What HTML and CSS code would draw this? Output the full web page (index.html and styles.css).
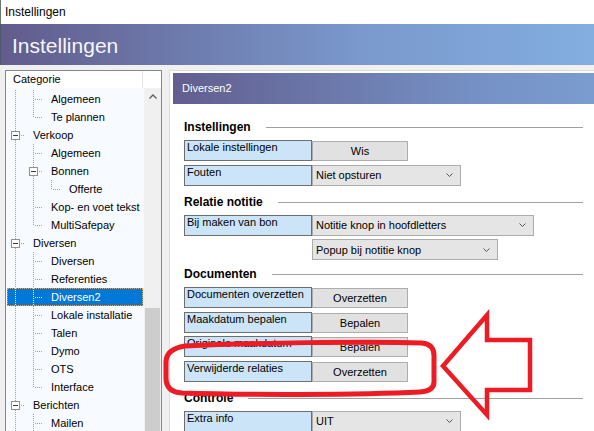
FILE: index.html
```html
<!DOCTYPE html>
<html lang="nl">
<head>
<meta charset="utf-8">
<title>Instellingen</title>
<link rel="stylesheet" href="styles.css">
</head>
<body>
<div class="window">
  <div class="titlebar">Instellingen</div>
  <div class="banner">Instellingen</div>
  <div class="main">
    <div class="tree">
      <div class="tree-head"><span class="tree-col">Categorie</span><span class="tree-rest"></span></div>
      <div class="tree-body">
        <div class="tree-rows">
          <div class="row"><span class="g g-line"></span><span class="g g-tee"></span><span class="txt">Algemeen</span></div>
          <div class="row"><span class="g g-line"></span><span class="g g-elbow"></span><span class="txt">Te plannen</span></div>
          <div class="row"><span class="g g-tee"><span class="exp"></span></span><span class="txt">Verkoop</span></div>
          <div class="row"><span class="g g-line"></span><span class="g g-tee"></span><span class="txt">Algemeen</span></div>
          <div class="row"><span class="g g-line"></span><span class="g g-tee"><span class="exp"></span></span><span class="txt">Bonnen</span></div>
          <div class="row"><span class="g g-line"></span><span class="g g-line"></span><span class="g g-elbow"></span><span class="txt">Offerte</span></div>
          <div class="row"><span class="g g-line"></span><span class="g g-tee"></span><span class="txt">Kop- en voet tekst</span></div>
          <div class="row"><span class="g g-line"></span><span class="g g-elbow"></span><span class="txt">MultiSafepay</span></div>
          <div class="row"><span class="g g-tee"><span class="exp"></span></span><span class="txt">Diversen</span></div>
          <div class="row"><span class="g g-line"></span><span class="g g-tee"></span><span class="txt">Diversen</span></div>
          <div class="row"><span class="g g-line"></span><span class="g g-tee"></span><span class="txt">Referenties</span></div>
          <div class="row selected"><span class="g g-line"></span><span class="g g-tee"></span><span class="txt">Diversen2</span></div>
          <div class="row"><span class="g g-line"></span><span class="g g-tee"></span><span class="txt">Lokale installatie</span></div>
          <div class="row"><span class="g g-line"></span><span class="g g-tee"></span><span class="txt">Talen</span></div>
          <div class="row"><span class="g g-line"></span><span class="g g-tee"></span><span class="txt">Dymo</span></div>
          <div class="row"><span class="g g-line"></span><span class="g g-tee"></span><span class="txt">OTS</span></div>
          <div class="row"><span class="g g-line"></span><span class="g g-elbow"></span><span class="txt">Interface</span></div>
          <div class="row"><span class="g g-tee"><span class="exp"></span></span><span class="txt">Berichten</span></div>
          <div class="row"><span class="g g-line"></span><span class="g g-tee"></span><span class="txt">Mailen</span></div>
        </div>
        <div class="scrollbar">
          <div class="sb-up"><svg width="8" height="5" viewBox="0 0 8 5"><polyline points="0.5,4.5 4,1 7.5,4.5" fill="none" stroke="#606060" stroke-width="1.4"/></svg></div>
          <div class="sb-track"></div>
          <div class="sb-thumb"></div>
        </div>
      </div>
    </div>

    <div class="panel">
      <div class="panel-head">Diversen2</div>
      <div class="panel-body">
        <div class="sec sec-first">
          <div class="sec-head"><span class="sec-title">Instellingen</span><span class="rule"></span></div>
          <div class="rows">
            <div class="frow"><span class="lbl">Lokale instellingen</span><span class="btn">Wis</span></div>
            <div class="frow"><span class="lbl">Fouten</span><span class="dd dd-149">Niet opsturen<svg class="chev" width="7" height="4" viewBox="0 0 7 4"><polyline points="0.5,0.5 3.5,3.5 6.5,0.5" fill="none" stroke="#555" stroke-width="1"/></svg></span></div>
          </div>
        </div>
        <div class="sec sec-relatie">
          <div class="sec-head"><span class="sec-title">Relatie notitie</span><span class="rule"></span></div>
          <div class="rows">
            <div class="frow"><span class="lbl">Bij maken van bon</span><span class="dd dd-222">Notitie knop in hoofdletters<svg class="chev" width="7" height="4" viewBox="0 0 7 4"><polyline points="0.5,0.5 3.5,3.5 6.5,0.5" fill="none" stroke="#555" stroke-width="1"/></svg></span></div>
            <div class="frow"><span class="lbl-space"></span><span class="dd dd-186">Popup bij notitie knop<svg class="chev" width="7" height="4" viewBox="0 0 7 4"><polyline points="0.5,0.5 3.5,3.5 6.5,0.5" fill="none" stroke="#555" stroke-width="1"/></svg></span></div>
          </div>
        </div>
        <div class="sec sec-docs">
          <div class="sec-head"><span class="sec-title">Documenten</span><span class="rule"></span></div>
          <div class="rows">
            <div class="frow"><span class="lbl">Documenten overzetten</span><span class="btn">Overzetten</span></div>
            <div class="frow"><span class="lbl">Maakdatum bepalen</span><span class="btn">Bepalen</span></div>
            <div class="frow"><span class="lbl">Originele maakdatum</span><span class="btn">Bepalen</span></div>
            <div class="frow"><span class="lbl">Verwijderde relaties</span><span class="btn">Overzetten</span></div>
          </div>
        </div>
        <div class="sec sec-controle">
          <div class="sec-head"><span class="sec-title">Controle</span><span class="rule"></span></div>
          <div class="rows">
            <div class="frow"><span class="lbl">Extra info</span><span class="dd dd-149">UIT<svg class="chev" width="7" height="4" viewBox="0 0 7 4"><polyline points="0.5,0.5 3.5,3.5 6.5,0.5" fill="none" stroke="#555" stroke-width="1"/></svg></span></div>
          </div>
        </div>
      </div>
    </div>
  </div>

  <svg class="annot" width="594" height="431" viewBox="0 0 594 431">
    <path d="M 166 362 Q 166 349 185 346 C 250 343 370 341 422 343 Q 434 344 434 356 L 434 382 Q 434 391 420 392 C 360 395 240 395 182 393 Q 166 392 166 378 Z" fill="none" stroke="#ed1c24" stroke-width="5"/>
    <polygon points="443,366 487,315 487,340 530,340 530,390 487,390 487,415" fill="none" stroke="#ed1c24" stroke-width="4.5" stroke-linejoin="miter" stroke-miterlimit="10"/>
  </svg>
</div>
</body>
</html>
```

FILE: styles.css
```css
html, body {
  margin: 0;
  padding: 0;
  overflow: hidden;
}
body {
  font-family: "Liberation Sans", Arial, sans-serif;
  font-size: 11px;
  color: #000;
}
.window {
  position: relative;
  width: 594px;
  height: 431px;
  overflow: hidden;
  display: flex;
  flex-direction: column;
  background: #f0f0f0;
}
.titlebar {
  height: 24px;
  line-height: 24px;
  padding-left: 4px;
  background: #fff;
  font-size: 12px;
  border-left: 1px solid #6a7a6a;
  flex: none;
}
.banner {
  height: 39px;
  line-height: 39px;
  padding-top: 2px;
  padding-left: 11px;
  font-size: 21px;
  color: #f6f6fa;
  background: linear-gradient(to right, #615c8c 0%, #7a98cc 60%, #83aee0 100%);
  border-left: 1px solid #4e5a6e;
  flex: none;
}
.main {
  flex: 1;
  display: flex;
  gap: 7px;
  padding: 5px 0 0 5px;
  min-height: 0;
}

/* tree */
.tree {
  width: 157px;
  box-sizing: border-box;
  border: 1px solid #828790;
  border-bottom: 0;
  display: flex;
  flex-direction: column;
  flex: none;
  background: #f7fbff;
}
.tree-head {
  height: 17px;
  display: flex;
  background: #fff;
  flex: none;
}
.tree-col {
  width: 137px;
  border-right: 1px solid #e5e5e5;
  padding-left: 7px;
  box-sizing: border-box;
  line-height: 17px;
}
.tree-rest {
  flex: 1;
}
.tree-body {
  flex: 1;
  display: flex;
  min-height: 0;
}
.tree-rows {
  width: 138px;
  padding-top: 2px;
  flex: none;
}
.row {
  --dot: #a0a0a0;
  display: flex;
  height: 18px;
  margin: 0 1px;
  line-height: 18px;
  white-space: nowrap;
}
.row .txt {
  padding-left: 8px;
}
.row.selected {
  --dot: #ffffff;
  background: #0078d7;
  color: #fff;
  outline: 1px dotted #f5a142;
  outline-offset: -1px;
}
.g {
  width: 18px;
  height: 18px;
  flex: none;
  display: block;
}
.g-line {
  background: repeating-linear-gradient(to bottom, var(--dot) 0 1px, transparent 1px 2px) 8px 0 / 1px 18px no-repeat;
}
.g-tee {
  background:
    repeating-linear-gradient(to bottom, var(--dot) 0 1px, transparent 1px 2px) 8px 0 / 1px 18px no-repeat,
    repeating-linear-gradient(to right, var(--dot) 0 1px, transparent 1px 2px) 10px 9px / 8px 1px no-repeat;
}
.g-elbow {
  background:
    repeating-linear-gradient(to bottom, var(--dot) 0 1px, transparent 1px 2px) 8px 0 / 1px 10px no-repeat,
    repeating-linear-gradient(to right, var(--dot) 0 1px, transparent 1px 2px) 10px 9px / 8px 1px no-repeat;
}
.exp {
  display: flex;
  align-items: center;
  justify-content: center;
  width: 9px;
  height: 9px;
  box-sizing: border-box;
  margin: 5px 0 0 4px;
  border: 1px solid #919191;
  background: #fff;
}
.exp::before {
  content: "";
  width: 5px;
  height: 1px;
  background: #3c3c3c;
}
.scrollbar {
  flex: 1;
  display: flex;
  flex-direction: column;
  background: #f0f0f0;
}
.sb-up {
  height: 17px;
  display: flex;
  align-items: center;
  justify-content: center;
  flex: none;
}
.sb-track {
  height: 203px;
  flex: none;
}
.sb-thumb {
  flex: 1;
  margin: 0 1px;
  background: #cdcdcd;
}

/* panel */
.panel {
  flex: 1;
  background: #fff;
  border-top: 1px solid #dcdcdc;
  border-left: 1px solid #dcdcdc;
  padding: 2px 0 0 3px;
  display: flex;
  flex-direction: column;
}
.panel-head {
  height: 31px;
  line-height: 31px;
  padding-left: 9px;
  color: #fff;
  font-size: 11px;
  background: linear-gradient(to right, #625e8f 0px, #7590c4 300px, #83aee0 600px);
  flex: none;
}
.panel-body {
  padding: 16px 11px 0 11px;
}
.sec-relatie { margin-top: 9px; }
.sec-docs { margin-top: 7px; }
.sec-controle { margin-top: 9px; }
.sec-head {
  display: flex;
  height: 15px;
  line-height: 15px;
  margin-bottom: 5px;
}
.sec-title {
  font-weight: bold;
  font-size: 12px;
}
.rule {
  flex: 1;
  margin-left: 15px;
  margin-top: 7px;
  height: 0;
  border-top: 1px solid #a0a0a0;
}
.rows {
  display: flex;
  flex-direction: column;
  gap: 3.5px;
}
.frow {
  display: flex;
  height: 21px;
}
.lbl {
  width: 128px;
  height: 21px;
  box-sizing: border-box;
  border: 1px solid #6e6e6e;
  background: #cce4f7;
  padding: 0 2px;
  line-height: 13px;
  white-space: nowrap;
  overflow: hidden;
  flex: none;
}
.lbl-space {
  width: 128px;
  flex: none;
}
.btn {
  width: 96px;
  height: 20px;
  margin-top: 1px;
  box-sizing: border-box;
  border: 1px solid #adadad;
  background: #e1e1e1;
  text-align: center;
  line-height: 18px;
  flex: none;
}
.dd {
  height: 21px;
  box-sizing: border-box;
  border: 1px solid #acacac;
  background: #e5e5e5;
  display: flex;
  align-items: center;
  justify-content: space-between;
  padding: 0 7px 0 3px;
  flex: none;
  white-space: nowrap;
}
.dd-149 { width: 149px; }
.dd-222 { width: 222px; }
.dd-186 { width: 186px; }
.chev {
  flex: none;
}

/* annotation overlay */
.annot {
  position: absolute;
  left: 0;
  top: 0;
  pointer-events: none;
}
```
